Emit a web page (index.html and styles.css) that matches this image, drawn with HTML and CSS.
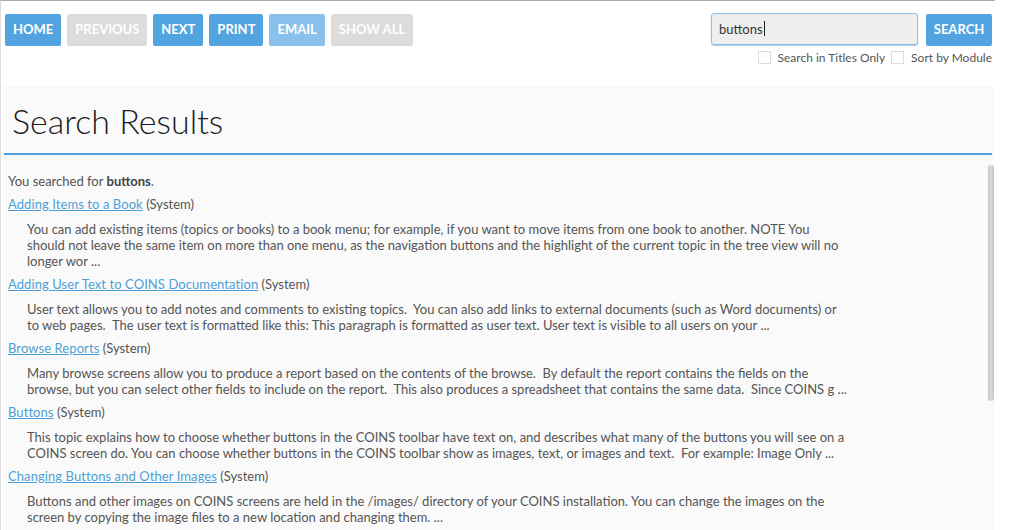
FILE: index.html
```html
<!DOCTYPE html>
<html>
<head>
<meta charset="utf-8">
<link rel="stylesheet" href="styles.css">
</head>
<body>
<div class="frame">
  <div class="toolbar">
    <div class="nav">
      <span class="btn">HOME</span>
      <span class="btn off">PREVIOUS</span>
      <span class="btn">NEXT</span>
      <span class="btn">PRINT</span>
      <span class="btn light">EMAIL</span>
      <span class="btn off">SHOW ALL</span>
    </div>
    <div class="search">
      <div class="search-row">
        <div class="input"><span>buttons</span><span class="caret"></span></div>
        <span class="btn sbtn">SEARCH</span>
      </div>
      <div class="opts">
        <span class="cb"></span><span class="lbl">Search in Titles Only</span>
        <span class="cb"></span><span class="lbl">Sort by Module</span>
      </div>
    </div>
  </div>
  <div class="panel">
    <div class="head"><h1>Search Results</h1></div>
    <div class="scrollwrap">
      <div class="scroll">
        <p class="searched">You searched for <b>buttons</b>.</p>
        <div class="item">
          <div class="title"><a href="#">Adding Items to a Book</a> (System)</div>
          <div class="desc">You can add existing items (topics or books) to a book menu; for example, if you want to move items from one book to another. NOTE You should not leave the same item on more than one menu, as the navigation buttons and the highlight of the current topic in the tree view will no longer wor ...</div>
        </div>
        <div class="item">
          <div class="title"><a href="#">Adding User Text to COINS Documentation</a> (System)</div>
          <div class="desc">User text allows you to add notes and comments to existing topics.&nbsp; You can also add links to external documents (such as Word documents) or to web pages.&nbsp; The user text is formatted like this: This paragraph is formatted as user text. User text is visible to all users on your ...</div>
        </div>
        <div class="item">
          <div class="title"><a href="#">Browse Reports</a> (System)</div>
          <div class="desc">Many browse screens allow you to produce a report based on the contents of the browse.&nbsp; By default the report contains the fields on the browse, but you can select other fields to include on the report.&nbsp; This also produces a spreadsheet that contains the same data.&nbsp; Since COINS g ...</div>
        </div>
        <div class="item">
          <div class="title"><a href="#">Buttons</a> (System)</div>
          <div class="desc">This topic explains how to choose whether buttons in the COINS toolbar have text on, and describes what many of the buttons you will see on a COINS screen do. You can choose whether buttons in the COINS toolbar show as images, text, or images and text.&nbsp; For example: Image Only ...</div>
        </div>
        <div class="item">
          <div class="title"><a href="#">Changing Buttons and Other Images</a> (System)</div>
          <div class="desc">Buttons and other images on COINS screens are held in the /images/ directory of your COINS installation. You can change the images on the screen by copying the image files to a new location and changing them. ...</div>
        </div>
      </div>
      <div class="thumb"></div>
    </div>
  </div>
</div>
</body>
</html>
```
FILE: styles.css
```css
html, body {
  margin: 0;
  padding: 0;
  background: #fff;
  overflow: hidden;
}
body {
  font-family: Lato, "Open Sans", "Liberation Sans", sans-serif;
  color: #555;
  font-size: 13px;
}
.frame {
  width: 994px;
  height: 529px;
  border-top: 1px solid #a9a9a9;
  border-left: 1px solid #dedede;
  display: flex;
  flex-direction: column;
}
.toolbar {
  height: 85px;
  display: flex;
  justify-content: space-between;
  flex-shrink: 0;
}
.nav {
  display: flex;
  gap: 6px;
  padding: 13px 0 0 4px;
  align-items: flex-start;
}
.btn {
  display: inline-flex;
  align-items: center;
  height: 32px;
  padding: 0 8px 2px;
  background: #52a4e0;
  color: #fff;
  font-weight: 700;
  font-size: 13px;
  border-radius: 2px;
  box-sizing: border-box;
}
.btn.off { background: #dcdcdc; }
.btn.light { background: #8ac0ec; }
.search {
  padding: 12px 3px 0 0;
  display: flex;
  flex-direction: column;
  align-items: flex-end;
}
.search-row {
  display: flex;
  gap: 8px;
  align-items: flex-start;
}
.input {
  width: 207px;
  height: 32px;
  box-sizing: border-box;
  background: #eeeeee;
  border: 1px solid #8fc1e8;
  border-radius: 3px;
  box-shadow: 0 1px 1px rgba(80, 150, 210, 0.5);
  padding: 0 7px 1px;
  display: flex;
  align-items: center;
  font-size: 13px;
  color: #333;
}
.caret {
  display: inline-block;
  width: 1px;
  height: 15px;
  background: #222;
  margin-left: 1px;
}
.sbtn {
  margin-top: 1px;
  width: 66px;
  justify-content: center;
}
.opts {
  display: flex;
  align-items: center;
  margin-top: 4px;
  font-size: 12px;
  color: #555;
}
.cb {
  width: 13px;
  height: 13px;
  box-sizing: border-box;
  border: 1px solid #dcdcdc;
  background: #fff;
  margin-right: 7px;
}
.lbl { margin-right: 6px; }
.lbl:last-child { margin-right: 0; }
.panel {
  flex: 1;
  margin-left: 2px;
  background: #fafafa;
  display: flex;
  flex-direction: column;
  min-height: 0;
}
.head {
  padding: 15px 0 12px 8px;
  margin: 0 3px 0 1px;
  border-bottom: 2px solid #4c9fdc;
}
h1 {
  margin: 0;
  font-size: 34px;
  line-height: 40px;
  font-weight: 300;
  color: #1e1e1e;
}
.scrollwrap {
  flex: 1;
  min-height: 0;
  margin-top: 3px;
  position: relative;
}
.scroll {
  height: 100%;
  overflow: hidden;
  box-sizing: border-box;
  padding: 15px 0 0 5px;
}
.thumb {
  position: absolute;
  right: 1px;
  top: 7px;
  width: 6px;
  height: 236px;
  border-radius: 3px;
  background: linear-gradient(to right, #c4c4c4, #dcdcdc 50%, #c4c4c4);
}
.searched {
  margin: 0;
  line-height: 16px;
}
.searched b { color: #444; font-weight: 700; }
.item { margin-top: 7px; }
.title { line-height: 16px; }
.title a {
  color: #4f9fd6;
  text-decoration: underline;
  letter-spacing: 0.08px;
}
.desc {
  margin-top: 9px;
  padding-left: 19px;
  width: 821px;
  line-height: 16px;
}
```
